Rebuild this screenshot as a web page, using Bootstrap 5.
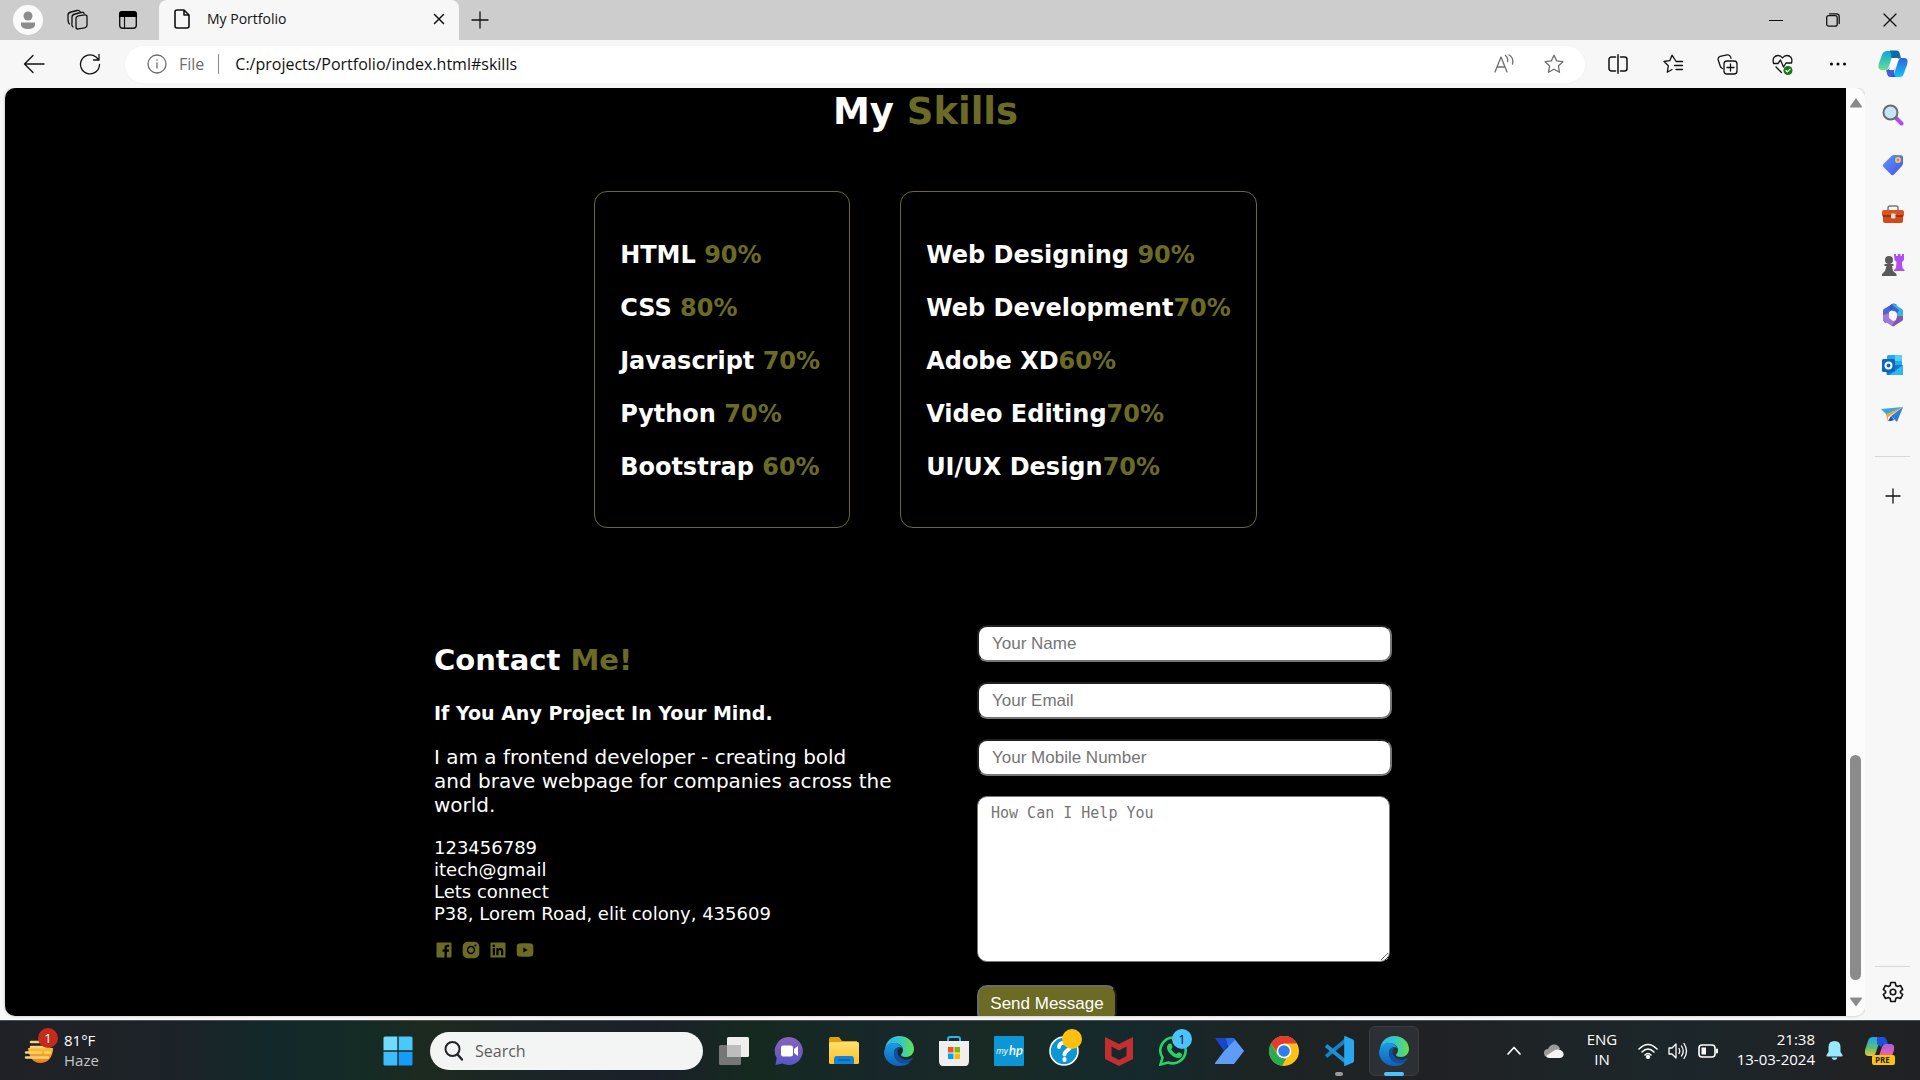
<!DOCTYPE html>
<html lang="en">
<head>
<meta charset="utf-8">
<meta name="viewport" content="width=device-width, initial-scale=1">
<title>My Portfolio</title>
<link rel="stylesheet" href="https://cdn.jsdelivr.net/npm/bootstrap@5.3.0/dist/css/bootstrap.min.css">
<script defer src="https://cdn.jsdelivr.net/npm/bootstrap@5.3.0/dist/js/bootstrap.bundle.min.js"></script>
<style>
:root { --olive: #6b6b26; --chrome: #f7f7f7; }
body { font-family: "Open Sans", "Noto Sans", sans-serif; background: var(--chrome); color: #111; }
svg { display: block; flex: none; }
.bare { background: none; border: 0; padding: 0; color: inherit; display: flex; align-items: center; justify-content: center; flex: none; }
.line-icon { fill: none; stroke: currentColor; stroke-width: 1.3; stroke-linecap: round; stroke-linejoin: round; }
.bold-line { stroke-width: 1.6; }

.titlebar { height: 40px; background: #cdcdcd; padding: 0 2px 0 3px; }
.titlebar .bare { width: 50px; }
.titlebar .win-btn { width: 57px; }
.titlebar .plus-btn { width: 42px; }
.page-tab { width: 300px; margin-left: 6px; background: var(--chrome); border-radius: 8px 8px 0 0; padding: 0 4px 2px 15px; font-size: 14px; }
.page-tab .bare { width: 32px; }

.toolbar { height: 48px; padding-left: 6px; }
.toolbar .bare { width: 55px; height: 37px; }
.toolbar .nav-btn { width: 56px; }
.address { height: 37px; background: #fff; border-radius: 19px; margin: 0 5px 0 7px; padding: 0 6px 0 22px; color: #6d6d6d; font-size: 16px; box-shadow: 0 0 3px #0000000a; }
.address .bare { width: 50px; }
.address .sep { width: 1px; height: 20px; background: #888; margin: 0 16px 0 14px; }
.address input { border: 0; outline: 0; background: none; color: #111; padding: 0; min-width: 0; font-size: 16px; }

.frame { border-radius: 10px; overflow: hidden; margin-left: 5px; box-shadow: 0 0 3px #0004; min-width: 0; min-height: 0; }
.site { background: #000; color: #fff; font-family: "DejaVu Sans", sans-serif; overflow: hidden; min-width: 0; }
.site em { font-style: normal; color: var(--olive); }
.site h1 { font-size: 37px; line-height: 48px; font-weight: 700; margin: 0 0 55px; text-align: center; }
.skill-box { border: 1px solid var(--olive); border-radius: 13px; padding: 48px 25px 45px; min-width: 256px; font-size: 24px; line-height: 30px; font-weight: 700; }
.skill-box ul { gap: 23px; }
.skills { gap: 50px; }
.contact { max-width: 983px; margin: 97px auto 0; }
.about { width: 543px; padding-top: 17px; }
.about h2 { font-size: 29px; line-height: 36px; font-weight: 700; margin: 0 0 23px; }
.about h3 { font-size: 19px; line-height: 24px; font-weight: 700; margin: 0 0 20px; }
.about p { font-size: 20px; line-height: 24px; margin: 0 0 20px; }
.about address { font-size: 18px; line-height: 22px; margin: 0 0 15px; }
.about .socials { gap: 7px; color: var(--olive); }
.about .socials a { color: inherit; }
.msg-form { width: 415px; gap: 20px; font-family: "Liberation Sans", sans-serif; }
.msg-form .form-control { border: 2px inset #767676; border-radius: 10px; height: 37px; padding: 0 13px; font-size: 17px; line-height: 20px; background: #fff; }
.msg-form .form-control::placeholder { color: #757575; opacity: 1; }
.msg-form textarea.form-control { border: 1px solid #767676; width: 413px; height: 166px; padding: 6px 13px; font-family: "DejaVu Sans Mono", monospace; font-size: 15px; resize: both; }
.msg-form .btn { background: var(--olive); color: #fff; border: 2px outset #6b6b6b; border-radius: 10px; font-size: 17px; line-height: 20px; padding: 7px 10px; width: 140px; margin-top: 3px; }

.scroller { width: 19px; background: #fcfcfc; padding: 10px 0 9px; }
.scroller .thumb { width: 11px; height: 225px; border-radius: 6px; background: #8b8b8b; margin-bottom: 17px; }
.sidebar { width: 55px; padding: 2px 0 3px; }
.sidebar .bare { width: 55px; height: 50px; }
.sidebar hr { width: 35px; margin: 0; border-color: #777; }
.sidebar .split { margin: 16px 0 14px; }

.taskbar { height: 60px; color: #fff; font-size: 15px; line-height: 20px; border-top: 1px solid #4a5150;
  background: linear-gradient(90deg, #202126 0, #1c2328 9%, #13282a 14%, #142b25 19%, #1d2a1f 22%, #1b2427 28%, #1b2029 34%, #15291f 39%, #17272a 46%, #192a24 52%, #15292d 59%, #1c2424 65%, #202124 75%, #1e2426 80%, #1c262a 88%, #202224 96%, #202124 100%); }
.weather { width: 370px; padding-left: 24px; gap: 9px; min-width: 0; }
.weather .reading { padding-bottom: 2px; }
.weather .sky { color: #c4c6c8; }
.task-btn { width: 55px; height: 59px; position: relative; }
.task-btn.active .plate { width: 50px; height: 50px; background: #2c2f33; border: 1px solid #3a3d40; border-radius: 6px; }
.task-btn .run-mark { position: absolute; bottom: 4px; left: 50%; margin-left: -4px; width: 8px; height: 4px; border-radius: 2px; background: #999; }
.task-btn.active .run-mark { width: 20px; margin-left: -10px; background: #4cc2ff; }
.count { position: absolute; width: 20px; height: 20px; border-radius: 50%; font-size: 13px; line-height: 20px; text-align: center; }
.count.red { left: 14px; top: -8px; background: #c42b1c; color: #fff; }
.count.blue { left: 26px; top: 8px; background: #4cc2ff; color: #111; }
.count.gold { left: 26px; top: 8px; background: #ffbf10; }
.find-box { width: 273px; height: 38px; border-radius: 19px; background: #f3f4f4; margin: 0 3px 0 5px; padding: 0 14px; gap: 12px; }
.find-box input { border: 0; outline: 0; background: none; min-width: 0; padding: 0; font-size: 16px; }
.find-box input::placeholder { color: #5c5c5c; }
.tray { padding-right: 13px; }
.tray .bare { width: 30px; }
.tray .w38 { width: 38px; } .tray .w42 { width: 42px; } .tray .w54 { width: 54px; }
.tray .lang, .tray .clock { padding-bottom: 3px; }
.tray .clock { width: 92px; }
</style>
</head>
<body class="vh-100 overflow-hidden d-flex flex-column">
<svg width="0" height="0" class="position-absolute">
  <defs>
    <linearGradient id="eA" x1="0" y1="0" x2="1" y2="0"><stop offset="0" stop-color="#2fb6ea"/><stop offset=".5" stop-color="#35c7c8"/><stop offset="1" stop-color="#66e04d"/></linearGradient>
    <linearGradient id="eB" x1="0" y1="0" x2="0" y2="1"><stop offset="0" stop-color="#1b9de2"/><stop offset="1" stop-color="#1160b8"/></linearGradient>
    <linearGradient id="cA" x1="0" y1="0" x2="0" y2="1"><stop offset="0" stop-color="#0aa5e0"/><stop offset="1" stop-color="#6be08a"/></linearGradient>
    <linearGradient id="cB" x1="0" y1="0" x2="0" y2="1"><stop offset="0" stop-color="#2e62dc"/><stop offset="1" stop-color="#12c4fb"/></linearGradient>
    <linearGradient id="pA" x1="0" y1="0" x2="0" y2="1"><stop offset="0" stop-color="#1fa3f0"/><stop offset=".6" stop-color="#5fc26b"/><stop offset="1" stop-color="#f0c23a"/></linearGradient>
    <linearGradient id="pB" x1="0" y1="0" x2="0" y2="1"><stop offset="0" stop-color="#a35ff0"/><stop offset="1" stop-color="#f7648a"/></linearGradient>
    <linearGradient id="vi" x1="0" y1="0" x2="0" y2="1"><stop offset="0" stop-color="#8a63b8"/><stop offset="1" stop-color="#5558c8"/></linearGradient>
    <linearGradient id="bl" x1="0" y1="0" x2="1" y2="1"><stop offset="0" stop-color="#5b9cf6"/><stop offset="1" stop-color="#4a4cf0"/></linearGradient>
    <linearGradient id="fo" x1="0" y1="0" x2="0" y2="1"><stop offset="0" stop-color="#ffdf72"/><stop offset="1" stop-color="#ffc21f"/></linearGradient>
    <linearGradient id="su" x1="0" y1="0" x2="0" y2="1"><stop offset="0" stop-color="#ffc02e"/><stop offset="1" stop-color="#ee7b16"/></linearGradient>
    <symbol id="edge" viewBox="0 0 30 30">
      <path fill="url(#eA)" d="M1 13C2 5 8 0 15 0c9 0 15 6 15 13 0 5-4 8-8 8-3 0-5-1-5-2 0-1 2-2 2-5 0-4-4-7-9-7-4 0-7 2-9 6z"/>
      <path fill="url(#eB)" d="M0 16C1 10 5 7 10 7c4 0 7 2 8.500 5C15 10 10 12 10 17c0 6 5 10 11 10 2 0 4-1 5-1-3 3-6 4-11 4C7 30 0 24 0 16z"/>
      <path fill="#0f4f9e" d="M10 17c0-4 3-6 6-6-3 3-3 6-1 9 3 4 8 5 13 2 .6-.3 1 .2.600.800C27 25 25 27 22 27.500 15 28 10 23 10 17z"/>
    </symbol>
  </defs>
</svg>

<header class="titlebar d-flex flex-shrink-0">
  <button class="bare" aria-label="Profile"><svg width="30" height="30"><circle cx="15" cy="15" r="15" fill="#fafafa"/><circle cx="15" cy="11" r="4.500" fill="#8c8c8c"/><path fill="#8c8c8c" d="M8 17.500h14v2c0 3-3 4.500-7 4.500s-7-1.500-7-4.500z"/></svg></button>
  <button class="bare" aria-label="Workspaces"><svg class="line-icon" width="22" height="22"><rect x="9" y="7" width="11" height="13" rx="2.500" transform="skewY(-10) translate(0 2)"/><path d="M6 18c-2-1-1-3-1-5V8c0-2 1-2.500 3-3l6-1.500c2-.5 3 0 3 1M2.500 15C1 14 1 12 1 10V6c0-2 1-2.500 3-3l6-1.500c1.500-.4 2.500 0 3 1"/></svg></button>
  <button class="bare" aria-label="Tab actions"><svg width="20" height="20"><rect x="1.700" y="1.700" width="16.600" height="16.600" rx="3" fill="none" stroke="#111" stroke-width="1.400"/><path d="M1 7V4a3 3 0 0 1 3-3h12a3 3 0 0 1 3 3v3z"/><path d="M6.500 7v11" stroke="#111" stroke-width="1.200"/></svg></button>
  <div class="page-tab d-flex align-items-center">
    <svg class="line-icon bold-line" width="17" height="22" viewBox="0 0 17 22"><path d="M3 2h7l5 5v11a2 2 0 0 1-2 2H3a2 2 0 0 1-2-2V4a2 2 0 0 1 2-2zM10 2v5h5"/></svg>
    <span class="flex-grow-1 ms-3 lh-1">My Portfolio</span>
    <button class="bare" aria-label="Close tab"><svg class="line-icon" width="12" height="12"><path d="M1.500 1.500l9 9m0-9l-9 9" stroke-width="1.500"/></svg></button>
  </div>
  <button class="bare plus-btn" aria-label="New tab"><svg class="line-icon" width="18" height="18"><path d="M9 1v16M1 9h16"/></svg></button>
  <div class="d-flex ms-auto">
    <button class="bare win-btn" aria-label="Minimize"><svg width="14" height="14"><path d="M0 7.500h14" stroke="#111"/></svg></button>
    <button class="bare win-btn" aria-label="Restore"><svg class="line-icon" width="14" height="14"><rect x=".7" y="2.700" width="10.500" height="10.500" rx="2"/><path d="M3.500.8h7a2.700 2.700 0 0 1 2.700 2.700v7"/></svg></button>
    <button class="bare win-btn" aria-label="Close"><svg class="line-icon" width="14" height="14"><path d="M1 1l12 12m0-12L1 13"/></svg></button>
  </div>
</header>

<nav class="toolbar d-flex align-items-center flex-shrink-0">
  <button class="bare nav-btn" aria-label="Back"><svg class="line-icon" width="22" height="20"><path d="M21 10H2m8-8.500L1.500 10l8.500 8.500"/></svg></button>
  <button class="bare nav-btn" aria-label="Reload"><svg class="line-icon" width="22" height="22"><path d="M20.500 11.500A9.500 9.500 0 1 1 17 4l3 3M20 1.500V7h-5.500"/></svg></button>
  <div class="address d-flex align-items-center flex-grow-1">
    <svg class="line-icon" width="20" height="20"><circle cx="10" cy="10" r="9"/><path d="M10 9v5M10 6v.2"/></svg>
    <label for="url" class="ms-2 ps-1">File</label><span class="sep"></span>
    <input id="url" class="flex-grow-1" type="text" value="C:/projects/Portfolio/index.html#skills">
    <button class="bare" aria-label="Read aloud"><svg class="line-icon" width="20" height="20"><path d="M1 18L7 3l6 15M3 13h8M11.500 1.500c2 1.500 2.500 4 2 6M15 1c3.500 2 4.500 5 3.500 9"/></svg></button>
    <button class="bare" aria-label="Favorite"><svg class="line-icon" width="20" height="20"><path d="M10 1.200l2.700 5.700 6.200.8-4.500 4.300 1.100 6.300L10 15.200l-5.500 3.100 1.100-6.300L1.100 7.700l6.200-.8z"/></svg></button>
  </div>
  <button class="bare" aria-label="Split screen"><svg class="line-icon" width="20" height="20"><path d="M7.500 3H3.500A2.500 2.500 0 0 0 1 5.500v9A2.500 2.500 0 0 0 3.500 17h4M12.500 3h4A2.500 2.500 0 0 1 19 5.500v9a2.500 2.500 0 0 1-2.500 2.500h-4M10 .8v18.400" stroke-width="1.500"/></svg></button>
  <button class="bare" aria-label="Favorites"><svg class="line-icon" width="20" height="20"><path d="M12.500 6.500L9 1.200 6.800 6.700 1 7.500l4.300 4.300-1 6.400L9 15.500M13 7.500h6.500M11.500 11.500h8M13 15.500h6.500"/></svg></button>
  <button class="bare" aria-label="Collections"><svg class="line-icon" width="21" height="21"><rect x="7" y="7" width="13" height="13" rx="3"/><path d="M13.500 10v7M10 13.500h7M5.500 14.500c-1.500-.5-2-1-2.300-2.500L1.200 6c-.4-2 .3-3 2-3.600L10 .9c2-.4 3 .2 3.600 2l.4 1.500"/></svg></button>
  <button class="bare" aria-label="Browser essentials"><svg class="line-icon" width="21" height="21"><path d="M1.500 9C0 4 3 1.500 6 1.500c2 0 3.500 1 4.500 2.500 1-1.500 2.500-2.500 4.500-2.500 3 0 6 2.500 4.500 7.500M1.500 9.500H6l2.500-3.500 3 7 2.500-4H19M4 13l5.500 5.500"/><circle cx="16" cy="16.500" r="4.500" fill="#107c10" stroke="none"/><path d="M14 16.500l1.400 1.400 2.600-2.600" stroke="#fff"/></svg></button>
  <button class="bare" aria-label="Settings and more"><svg width="18" height="4"><circle cx="2.500" cy="2" r="1.500"/><circle cx="9" cy="2" r="1.500"/><circle cx="15.500" cy="2" r="1.500"/></svg></button>
  <button class="bare" aria-label="Copilot"><svg width="30" height="28" viewBox="0 0 30 28"><path fill="url(#cA)" d="M9 1h9c-2 1-3 3-4 6l-3 9c-1 3-2 4-4 4H4c-4 0-4-3-3-7l3-8c1-3 3-4 5-4z"/><path fill="#0d6aa8" d="M12 .5h6c2.500 0 3.500 1 4 4l1 4h-3c-2 0-3.500 1-4 3L13 7c1-3-1-5-1-6.500z"/><path fill="url(#cB)" d="M22 27h-9c2-1 3-3 4-6l3-9c1-3 2-4 4-4h2c4 0 4 3 3 7l-3 8c-1 3-2 4-4 4z"/><path fill="#2145cf" d="M18 27h-5c-3 0-3.500-1.500-4-4l-1-3c2 0 3-1 4-3h5c-1 4-2 8 1 10z" opacity=".85"/><path fill="#fff" d="M14 8h6l-4 12h-5z"/></svg></button>
</nav>

<div class="d-flex flex-grow-1 overflow-hidden">
  <div class="flex-grow-1 d-flex flex-column pb-1 overflow-hidden">
  <div class="frame flex-grow-1 d-flex">
    <main class="site flex-grow-1">
      <section id="skills">
        <h1>My <em>Skills</em></h1>
        <div class="skills d-flex justify-content-center">
          <div class="skill-box"><ul class="list-unstyled mb-0 d-flex flex-column">
            <li>HTML <em>90%</em></li><li>CSS <em>80%</em></li><li>Javascript <em>70%</em></li><li>Python <em>70%</em></li><li>Bootstrap <em>60%</em></li>
          </ul></div>
          <div class="skill-box"><ul class="list-unstyled mb-0 d-flex flex-column">
            <li>Web Designing <em>90%</em></li><li>Web Development<em>70%</em></li><li>Adobe XD<em>60%</em></li><li>Video Editing<em>70%</em></li><li>UI/UX Design<em>70%</em></li>
          </ul></div>
        </div>
      </section>
      <section class="contact d-flex">
        <div class="about">
          <h2>Contact <em>Me!</em></h2>
          <h3>If You Any Project In Your Mind.</h3>
          <p>I am a frontend developer - creating bold<br>and brave webpage for companies across the<br>world.</p>
          <address>123456789<br>itech@gmail<br>Lets connect<br>P38, Lorem Road, elit colony, 435609</address>
          <div class="socials d-flex">
            <a href="#" aria-label="Facebook"><svg width="20" height="20" viewBox="0 0 24 24" fill="currentColor"><path d="M20 3H4a1 1 0 0 0-1 1v16a1 1 0 0 0 1 1h8.615v-6.960h-2.338v-2.725h2.338v-2c0-2.325 1.420-3.592 3.500-3.592.699-.002 1.399.034 2.095.107v2.420h-1.435c-1.128 0-1.348.538-1.348 1.325v1.735h2.697l-.35 2.725h-2.348V21H20a1 1 0 0 0 1-1V4a1 1 0 0 0-1-1z"/></svg></a>
            <a href="#" aria-label="Instagram"><svg width="20" height="20" viewBox="0 0 24 24" fill="currentColor" fill-rule="evenodd"><path d="M8 2h8a6 6 0 0 1 6 6v8a6 6 0 0 1-6 6H8a6 6 0 0 1-6-6V8a6 6 0 0 1 6-6zm4 5a5 5 0 1 0 0 10 5 5 0 0 0 0-10zm0 1.800a3.200 3.200 0 1 1 0 6.400 3.200 3.200 0 0 1 0-6.400zM17.300 5.400a1.200 1.200 0 1 0 0 2.400 1.200 1.200 0 0 0 0-2.400z"/></svg></a>
            <a href="#" aria-label="LinkedIn"><svg width="20" height="20" viewBox="0 0 24 24" fill="currentColor" fill-rule="evenodd"><path d="M20 3H4a1 1 0 0 0-1 1v16a1 1 0 0 0 1 1h16a1 1 0 0 0 1-1V4a1 1 0 0 0-1-1zM8.339 18.337H5.667v-8.590h2.672zM7 8.574a1.550 1.550 0 1 1 0-3.096 1.550 1.550 0 0 1 0 3.096zM18.338 18.337h-2.669V14.160c0-.996-.018-2.277-1.388-2.277-1.390 0-1.601 1.086-1.601 2.207v4.248h-2.667v-8.590h2.560v1.174h.037c.355-.675 1.227-1.387 2.524-1.387 2.704 0 3.203 1.778 3.203 4.092z"/></svg></a>
            <a href="#" aria-label="YouTube"><svg width="20" height="20" viewBox="0 0 24 24" fill="currentColor" fill-rule="evenodd"><path d="M5 4.200c4-.4 10-.4 14 0 1.600.2 2.600 1.200 2.800 2.800.3 3 .3 7 0 10-.2 1.600-1.200 2.600-2.800 2.800-4 .4-10 .4-14 0-1.600-.2-2.600-1.200-2.800-2.800-.3-3-.3-7 0-10 .2-1.600 1.200-2.600 2.800-2.800zM10 9v6l5.200-3z"/></svg></a>
          </div>
        </div>
        <form class="msg-form d-flex flex-column align-items-start">
          <input class="form-control" type="text" placeholder="Your Name" aria-label="Your Name">
          <input class="form-control" type="email" placeholder="Your Email" aria-label="Your Email">
          <input class="form-control" type="tel" placeholder="Your Mobile Number" aria-label="Your Mobile Number">
          <textarea class="form-control" placeholder="How Can I Help You" aria-label="How Can I Help You"></textarea>
          <button class="btn" type="button">Send Message</button>
        </form>
      </section>
    </main>
    <div class="scroller d-flex flex-column align-items-center flex-shrink-0">
      <svg width="12" height="10"><path d="M6 0l6 8.500q0 1-1 1H1q-1 0-1-1z" fill="#8b8b8b"/></svg>
      <div class="flex-grow-1"></div>
      <div class="thumb"></div>
      <svg width="12" height="10"><path d="M6 9.500L0 1.500q0-1 1-1h10q1 0 1 1z" fill="#8b8b8b"/></svg>
    </div>
  </div>
  </div>

  <aside class="sidebar d-flex flex-column align-items-center flex-shrink-0">
    <button class="bare" aria-label="Search"><svg width="22" height="22"><path d="M14 14l5.500 5.500" stroke="#b04df0" stroke-width="4" stroke-linecap="round"/><path d="M13 13l2 2" stroke="#777" stroke-width="3"/><circle cx="8.500" cy="8.500" r="7" fill="#c3e6fb" stroke="#6b6b6b" stroke-width="2"/></svg></button>
    <button class="bare" aria-label="Shopping"><svg width="22" height="22"><path fill="url(#bl)" d="M12 1l7 .2q2 0 2 2V9q0 2-1.300 3.300L12 20.500q-1.500 1.500-3 0l-7.500-7.500q-1.500-1.500 0-3L9.500 2q1-1 2.500-1z"/><circle cx="16" cy="6" r="2.200" fill="#8a8fe8" stroke="#ffd21f" stroke-width="1.600"/></svg></button>
    <button class="bare" aria-label="Tools"><svg width="24" height="20"><path d="M7 6V3q0-2 2-2h6q2 0 2 2v3" fill="none" stroke="#777" stroke-width="1.500"/><rect x="1" y="5" width="22" height="7" rx="2" fill="#d95422"/><rect x="2" y="10" width="20" height="8" rx="2" fill="#d14a17"/><path d="M2 10h20v2H2z" fill="#9c300b"/><rect x="10" y="8.500" width="4.500" height="5" rx="1" fill="#ddd"/></svg></button>
    <button class="bare" aria-label="Games"><svg width="24" height="24"><path fill="#b44df0" d="M13 1h2v2h2V1h2.500v2H21V1h2v6l-2 2 .5 6 2 2v1H13v-1l2-2 .5-6-2-2z"/><g fill="#5a5a5a"><circle cx="8" cy="7" r="4"/><path d="M3.500 11h9v2H11l1 5 3.500 3v2H1v-2l3-3 1.500-5h-2z"/></g></svg></button>
    <button class="bare" aria-label="Microsoft 365"><svg width="22" height="24"><path fill="#4d63d6" d="M1 8q0-1.500 1-2l8-5q3-1.500 5 1l-3 4-5 3v8l-3 3q-3-1-3-4z"/><path fill="#3fb0ec" d="M10 1q1-.8 2 0l8 5q1 .6 1 2v8l-2 2-4-3v-4l-5-4z"/><path fill="#2a4fc0" d="M10 1q-3 2-2 5l7 5 2-4-4-3z" opacity=".7"/><path fill="#a07ad6" d="M1 12l6-2v5l4 3 4-1v3l-3 3q-1 .6-2 0l-8-5q-1-.6-1-2z"/><path fill="#8553b0" d="M21 13v3q0 1.400-1 2l-8 5q-1 .6-2-.2l4-5.800 1-4z"/><circle cx="11" cy="12" r="4" fill="#f7f7f7"/></svg></button>
    <button class="bare" aria-label="Outlook"><svg width="22" height="22"><rect x="5" y="1" width="15" height="16" rx="1.500" fill="#2aa8ea"/><path fill="#57d0f8" d="M13 1h7v6h-7z"/><path fill="#0f78c8" d="M5 11h16v10H6q-1.500 0-1.500-1.500z"/><path fill="#32b8f0" d="M21 11v9q0 1-1.500 1H7z"/><rect x="0" y="5" width="13" height="13" rx="1.500" fill="#0b66c3"/><circle cx="6.500" cy="11.500" r="3" fill="none" stroke="#fff" stroke-width="2"/></svg></button>
    <button class="bare" aria-label="Drop"><svg width="23" height="18"><path fill="#2fa8f0" d="M0 3L22 1 6 9z"/><path fill="#f4a522" d="M5 8L22 1 7 11v5z"/><path fill="#2b7ee0" d="M10 10L22 1l-6 15z"/><path fill="#1657b0" d="M7 15l3-5 3 4-3 1z"/></svg></button>
    <hr class="split">
    <button class="bare" aria-label="Customize"><svg class="line-icon" width="16" height="16"><path d="M8 1v14M1 8h14"/></svg></button>
    <hr class="mt-auto">
    <button class="bare" aria-label="Settings"><svg class="line-icon bold-line" width="22" height="22"><circle cx="11" cy="11" r="2.800"/><path d="M8.800 1.500h4.400l.6 3 1.800 1 2.900-1 2.200 3.800-2.300 2v1.400l2.300 2-2.200 3.800-2.900-1-1.800 1-.6 3H8.800l-.6-3-1.800-1-2.900 1-2.200-3.800 2.300-2v-1.400l-2.300-2L3.500 4.500l2.900 1 1.800-1z"/></svg></button>
  </aside>
</div>

<footer class="taskbar d-flex align-items-center flex-shrink-0">
  <div class="weather d-flex align-items-center">
    <div class="position-relative"><svg width="31" height="30"><path fill="url(#su)" d="M4 12h25c0 9-5 15-13 15C10 27 5 22 4 12z"/><path d="M7 6h8M7 11h18M2 16.500h15M21 16.500h5M2 21.500h22" stroke="#f6d27c" stroke-width="2.500" stroke-linecap="round"/></svg><span class="count red">1</span></div>
    <div class="reading"><div>81°F</div><div class="sky">Haze</div></div>
  </div>
  <button class="bare task-btn" aria-label="Start"><svg width="30" height="30"><path fill="#6fdcfd" d="M2 .5h12.300v13.800H.5V2Q.5.500 2 .5z"/><path fill="#48c8fc" d="M15.700.5H28q1.500 0 1.500 1.500v12.300H15.700z"/><path fill="#3fbdfb" d="M.5 15.700h13.800v13.800H2q-1.500 0-1.500-1.500z"/><path fill="#149cf8" d="M15.700 15.700h13.800V28q0 1.500-1.500 1.500H15.700z"/></svg></button>
  <div class="find-box d-flex align-items-center"><svg class="line-icon text-dark" width="19" height="20"><circle cx="8.500" cy="8" r="7" stroke-width="2"/><path d="M13.500 13.500L18 18.500" stroke-width="2.400"/></svg><input type="search" placeholder="Search" aria-label="Search"></div>
  <button class="bare task-btn" aria-label="Task view"><svg width="30" height="28"><rect x="8" width="22" height="20" rx="1.500" fill="#eee"/><rect y="8" width="22" height="20" rx="1.500" fill="#777"/><path d="M8 8h14v12H8z" fill="#bdbdbd"/></svg></button>
  <button class="bare task-btn" aria-label="Chat"><svg width="30" height="30"><path fill="url(#vi)" d="M15 1a14 14 0 1 1-6.500 26.500L1.500 29l1.200-7A14 14 0 0 1 15 1z"/><rect x="7" y="9.500" width="12" height="11" rx="2" fill="#fff"/><path fill="#fff" d="M20 13l4-3v10l-4-3z"/></svg></button>
  <button class="bare task-btn" aria-label="File Explorer"><svg width="30" height="28"><path fill="#e0a008" d="M0 2q0-2 2-2h8l3 4h15v8H0z"/><rect y="5" width="30" height="22" rx="1.500" fill="url(#fo)"/><path fill="#1183d8" d="M5 27v-5q0-3 3-3h14q3 0 3 3v5z"/><path d="M9 23h12" stroke="#0a5ba6" stroke-width="1.500"/></svg></button>
  <button class="bare task-btn" aria-label="Edge"><svg width="30" height="30"><use href="#edge"/></svg></button>
  <button class="bare task-btn" aria-label="Store"><svg width="30" height="30"><path d="M9 6V3q0-2 2-2h8q2 0 2 2v3" fill="none" stroke="#2bb5ee" stroke-width="2"/><path d="M0 5h30v20q0 5-4 5H4q-4 0-4-5z" fill="#efefef"/><path fill="#f25022" d="M9 11h5.500v5.500H9z"/><path fill="#7fba00" d="M15.500 11H21v5.500h-5.500z"/><path fill="#00a4ef" d="M9 17.500h5.500V23H9z"/><path fill="#ffb900" d="M15.500 17.500H21V23h-5.500z"/></svg></button>
  <button class="bare task-btn" aria-label="myHP"><svg width="30" height="30"><rect width="30" height="30" rx="1" fill="#0c96d6"/><text x="2" y="18" font-size="9" font-style="italic" fill="#fff">my</text><text x="15" y="19" font-size="13" font-style="italic" fill="#fff" font-weight="600" font-family="Lato">hp</text></svg></button>
  <button class="bare task-btn" aria-label="Help"><svg width="30" height="30"><circle cx="15" cy="15" r="14" fill="#0c96d6" stroke="#fff" stroke-width="1.600"/><path d="M10 11c0-6 11-6 11-.5 0 4-5.500 4-5.500 8M15.500 23v1" fill="none" stroke="#fff" stroke-width="4" stroke-linecap="round"/></svg><span class="count gold"></span></button>
  <button class="bare task-btn" aria-label="McAfee"><svg width="28" height="30"><path fill="#c32f2f" d="M0 1l14 7 14-7v22l-14 7-14-7zM6.500 10.500v9.500l7.500 4 7.500-4v-9.500L14 14.500z" fill-rule="evenodd"/></svg></button>
  <button class="bare task-btn" aria-label="WhatsApp"><svg width="30" height="30"><path d="M15.500 1.500A13 13 0 1 1 9 26.500L1.500 28.500l2-7A13 13 0 0 1 15.500 1.500z" fill="none" stroke="#25d366" stroke-width="2.600"/><path fill="#25d366" d="M10.500 7.500c1-.3 1.700 0 2 .8l1 2.400c.3.900-1.500 2.300-1.200 2.800 1.300 2.300 2.900 3.600 5 4.400.7.200 1.700-2 2.500-1.700l3 1.500c.6.400.2 3-1.300 3.800-5 2.500-14-5-13.500-10.500.2-1.500 1.200-3 2.500-3.500z"/></svg><span class="count blue">1</span></button>
  <button class="bare task-btn" aria-label="Power Automate"><svg width="30" height="26"><path fill="#1747c8" d="M1 0h18l-9 13z"/><path fill="#2d6ae8" d="M12 0h8l10 13H15z"/><path fill="#5f9cf8" d="M10 13L1 25q-.5 1 .5 1H20l10-13-9-11z"/></svg></button>
  <button class="bare task-btn" aria-label="Chrome"><svg width="30" height="30"><circle cx="15" cy="15" r="15" fill="#fbc116"/><path fill="#e33b2e" d="M2 7.500a15 15 0 0 1 26 0H15L9 18z"/><path fill="#2da94f" d="M2 7.500l6.500 11.300L15 22.500l2 .5-4 7A15 15 0 0 1 2 7.500z"/><circle cx="15" cy="15" r="7.300" fill="#fff"/><circle cx="15" cy="15" r="5.800" fill="#2f7de9"/></svg></button>
  <button class="bare task-btn" aria-label="Visual Studio Code"><svg width="30" height="30"><path fill="none" stroke="#1581c9" stroke-width="3.600" stroke-linejoin="round" d="M22 4L2 20.500"/><path fill="none" stroke="#1a90db" stroke-width="3.600" d="M2 9.500L22 26"/><path fill="#2aa6ef" d="M21 0l8 3.500q1 .5 1 1.500v20q0 1-1 1.500L21 30q-.8.300-.8-1V1q0-1.300.8-1z"/></svg><span class="run-mark"></span></button>
  <button class="bare task-btn active" aria-label="Edge, running"><span class="plate d-flex align-items-center justify-content-center"><svg width="30" height="30"><use href="#edge"/></svg></span><span class="run-mark"></span></button>

  <div class="tray d-flex align-items-center ms-auto">
    <button class="bare w38" aria-label="Hidden icons"><svg class="line-icon" width="14" height="9"><path d="M1 8l6-6.500L13 8" stroke-width="1.700"/></svg></button>
    <button class="bare w42" aria-label="OneDrive"><svg width="20" height="14"><path fill="#9a9a9a" d="M0 9q0-4 4-4 2-5 7-4.500 4 .5 5 4.500L6 13H4q-4 0-4-4z"/><path fill="#f4f4f4" d="M2 12l9-6q5-1.500 8 2 2 5-3 6H5q-2 0-3-2z"/></svg></button>
    <button class="bare w54 lang me-1">ENG<br>IN</button>
    <button class="bare" aria-label="Wi-Fi"><svg class="line-icon" width="20" height="16"><path d="M1 6Q10-3 19 6M4 9q6-6 12 0M7 12q3-3 6 0" stroke-width="1.500"/><circle cx="10" cy="14" r="1.500" fill="#fff"/></svg></button>
    <button class="bare" aria-label="Volume"><svg class="line-icon" width="20" height="18"><path d="M1 6h3l4-4v14l-4-4H1zM11 6.500q1.500 2.500 0 5M13.500 4q3.500 5 0 10M16 1.500q5 7.500 0 15"/></svg></button>
    <button class="bare" aria-label="Battery"><svg class="line-icon" width="20" height="14"><rect x="1" y="1" width="16" height="12" rx="3" stroke-width="1.600"/><path d="M3.500 3.500H8v7H3.500z" fill="#fff" stroke="none"/><path d="M19 5.500v3" stroke-width="2"/></svg></button>
    <div class="clock text-end">21:38<br>13-03-2024</div>
    <button class="bare w38" aria-label="Notifications"><svg width="17" height="19"><path fill="#98e8ff" d="M8.500 0q6 0 6 6v5l2 3q.5 1.500-1 1.500h-14q-1.500 0-1-1.500l2-3V6q0-6 6-6zM5.500 16.500h6q-1 2.500-3 2.500t-3-2.500z"/></svg></button>
    <button class="bare w54" aria-label="Copilot preview"><svg width="30" height="30"><path fill="url(#pA)" d="M8 1h10q-3 1-4 6l-3 9q-1 4-4 4H3q-4 0-3-6l3-9q1-4 5-4z"/><path fill="#1a52d8" d="M12 1h6q3 0 4 4l1 3h-4q-2 0-3 3l-4-3z"/><path fill="url(#pB)" d="M20 8h6q4 0 3 6l-2 6H14l3-9q1-3 3-3z"/><rect x="7" y="19" width="23" height="10" rx="2" fill="#ffc20e"/><text x="10" y="27" font-size="8" font-weight="700" fill="#222">PRE</text></svg></button>
  </div>
</footer>
</body>
</html>
